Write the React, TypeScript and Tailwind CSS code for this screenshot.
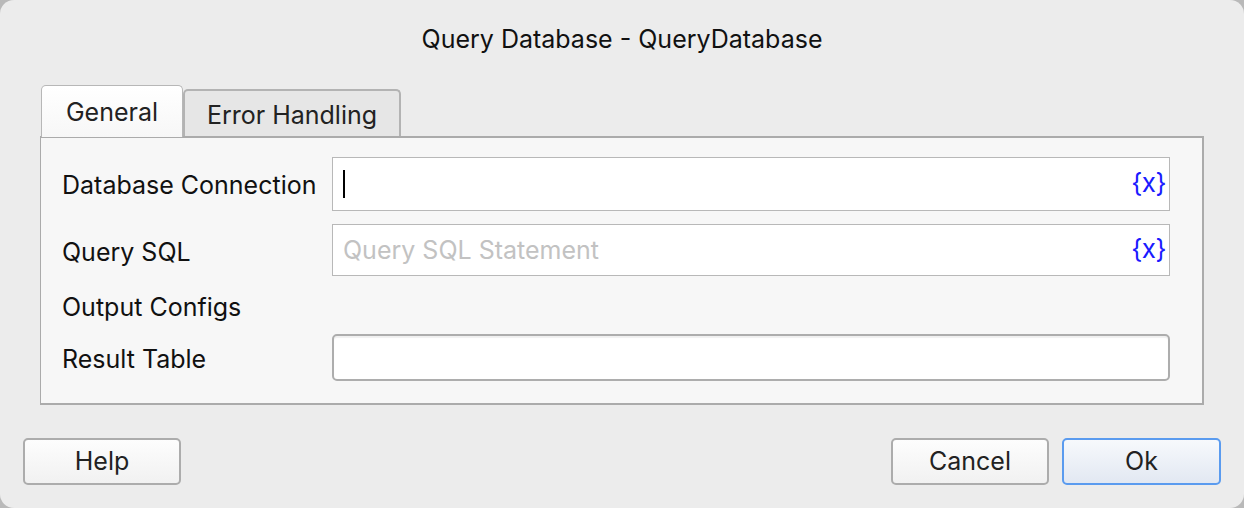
import React from "react";

const font = { fontFamily: "Inter, 'Noto Sans', 'Liberation Sans', sans-serif" };

function VarBadge() {
  return <span className="text-[26px] leading-none text-[#1a1aff] tracking-[-0.5px] pb-[2px]">{"{x}"}</span>;
}

export default function App() {
  return (
    <div className="w-[1244px] h-[508px] bg-[#b9b9b9]" style={font}>
      <div className="w-full h-full rounded-[14px] bg-[#ececec] flex flex-col text-[#1d1d1d]">
        <div className="h-[85px] flex justify-center pt-[24px]">
          <span className="text-[25px] leading-[30px] text-[#111]">Query Database - QueryDatabase</span>
        </div>

        <div className="flex items-end pl-[41px] h-[51px]">
          <div className="relative z-10 w-[142px] h-[52px] -mb-px rounded-t-[5px] border-[1.5px] border-b-0 border-[#b7b7b7] bg-gradient-to-b from-[#ffffff] to-[#f7f7f7] flex items-center justify-center pt-[2px]">
            <span className="text-[25px] leading-none text-[#222] pb-[1px]">General</span>
          </div>
          <div className="w-[218px] h-[47px] rounded-t-[5px] border-2 border-b-0 border-[#b3b3b3] bg-[#e6e6e6] flex items-center justify-center">
            <span className="text-[25px] leading-none text-[#222] pt-[4px]">Error Handling</span>
          </div>
        </div>

        <div className="mx-[40px] h-[269px] border-t-2 border-l-[1.5px] border-r-2 border-b-2 border-[#ababab] bg-[#f7f7f7] pl-[21px] pr-[32px] pt-[19px]">
          <div className="grid grid-cols-[270px_1fr] items-center">
            <span className="text-[25px] leading-none text-[#111] pt-[3px]">Database Connection</span>
            <div className="h-[54px] bg-white border border-[#b8b8b8] flex items-center justify-between pl-[10px] pr-[3px]">
              <span className="block w-[2px] h-[28px] bg-black" />
              <VarBadge />
            </div>

            <span className="text-[25px] leading-none text-[#111] mt-[13px] pt-[4px]">Query SQL</span>
            <div className="mt-[13px] h-[52px] bg-white border border-[#b8b8b8] flex items-center justify-between pl-[10px] pr-[3px]">
              <span className="text-[25px] leading-none text-[#c2c2c2]">Query SQL Statement</span>
              <VarBadge />
            </div>

            <span className="col-span-2 text-[25px] leading-[36px] h-[36px] mt-[13px] text-[#111]">Output Configs</span>

            <span className="text-[25px] leading-none text-[#111] mt-[9px] pt-[3px]">Result Table</span>
            <div className="mt-[9px] h-[47px] bg-white border-2 border-[#adadad] rounded-[5px] shadow-[inset_0_2px_1px_rgba(0,0,0,0.06)]" />
          </div>
        </div>

        <div className="flex items-start justify-between px-[23px] pt-[33px]">
          <button className="w-[158px] h-[47px] rounded-[5px] border-2 border-[#acacac] bg-gradient-to-b from-[#fdfdfd] to-[#f1f1f1] text-[25px] text-[#222] pt-[1px]">
            Help
          </button>
          <div className="flex gap-[13px]">
            <button className="w-[158px] h-[47px] rounded-[5px] border-2 border-[#acacac] bg-gradient-to-b from-[#fdfdfd] to-[#f1f1f1] text-[25px] text-[#222] pt-[1px]">
              Cancel
            </button>
            <button className="w-[159px] h-[47px] rounded-[5px] border-2 border-[#5a9bef] bg-gradient-to-b from-[#f7f9fc] to-[#e2e8f2] text-[25px] text-[#222] pt-[1px]">
              Ok
            </button>
          </div>
        </div>
      </div>
    </div>
  );
}
